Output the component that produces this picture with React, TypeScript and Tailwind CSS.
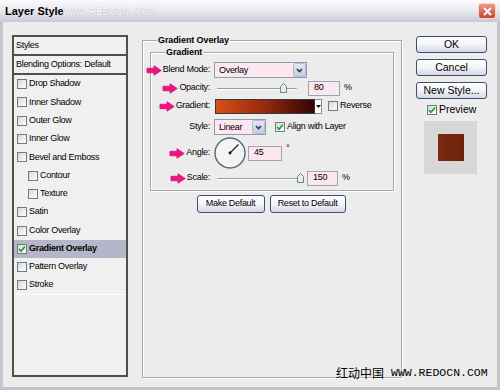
import React from "react";

const styleRows = [
  { label: "Drop Shadow" },
  { label: "Inner Shadow" },
  { label: "Outer Glow" },
  { label: "Inner Glow" },
  { label: "Bevel and Emboss" },
  { label: "Contour", indent: true },
  { label: "Texture", indent: true },
  { label: "Satin" },
  { label: "Color Overlay" },
  { label: "Gradient Overlay", active: true },
  { label: "Pattern Overlay" },
  { label: "Stroke" },
];

function Arrow() {
  return (
    <svg width="16" height="11" viewBox="0 0 16 11" className="shrink-0">
      <path
        d="M1 3.3 H8 V0.8 L15.2 5.5 L8 10.2 V7.7 H1 Z"
        fill="#e8187f"
        stroke="#e8187f"
        strokeWidth="1"
        strokeLinejoin="round"
      />
    </svg>
  );
}

function Check({ checked = false }: { checked?: boolean }) {
  return (
    <span className="flex h-[10px] w-[10px] shrink-0 items-center justify-center border border-[#6b7c8d] bg-gradient-to-br from-[#d9d9d2] to-white">
      {checked && (
        <svg width="8" height="8" viewBox="0 0 8 8">
          <path d="M1 4 L3 6.2 L7 1.5" fill="none" stroke="#23a023" strokeWidth="1.7" />
        </svg>
      )}
    </span>
  );
}

function Chevron() {
  return (
    <svg width="7" height="5" viewBox="0 0 7 5">
      <path d="M1 1 L3.5 3.6 L6 1" fill="none" stroke="#2c3a55" strokeWidth="1.6" />
    </svg>
  );
}

function Label({ text, arrow }: { text: string; arrow?: boolean }) {
  return (
    <div className="flex w-[59px] shrink-0 items-center justify-end gap-[1px] whitespace-nowrap">
      {arrow && <Arrow />}
      <span>{text}</span>
    </div>
  );
}

function Select({ value, width }: { value: string; width: string }) {
  return (
    <div className={`ml-[4px] flex h-[16px] shrink-0 border border-[#8d9cb0] bg-[#fde7ef] ${width}`}>
      <span className="flex-1 pl-[4px] leading-[14px]">{value}</span>
      <span className="flex w-[13px] items-center justify-center rounded-[2px] border border-[#b4bfd4] bg-gradient-to-b from-[#e3e8f3] to-[#c3cce0]">
        <Chevron />
      </span>
    </div>
  );
}

function Field({ value, width }: { value: string; width: string }) {
  return (
    <div className={`flex h-[15px] shrink-0 items-center border border-[#97a6b9] bg-[#fde7ef] pl-[5px] ${width}`}>
      {value}
    </div>
  );
}

function Thumb() {
  return (
    <svg width="7" height="10" viewBox="0 0 7 10">
      <path d="M0.5 3.5 L3.5 0.5 L6.5 3.5 V9.5 H0.5 Z" fill="#e4f2e4" stroke="#6f8571" strokeWidth="1" />
    </svg>
  );
}

function Slider({ width, thumb }: { width: string; thumb: string }) {
  return (
    <div className={`relative ml-[7px] h-[16px] shrink-0 ${width}`}>
      <div className="absolute left-0 right-0 top-[8px] h-[2px] rounded-[1px] border-t border-[#9a9a9a] bg-white" />
      <div className={`absolute top-[3px] ${thumb}`}>
        <Thumb />
      </div>
    </div>
  );
}

function XpButton({ children, className }: { children: React.ReactNode; className: string }) {
  return (
    <button
      className={`flex shrink-0 items-center justify-center rounded-[3px] border border-[#3d4f70] bg-gradient-to-b from-white via-[#f4f4f7] to-[#d4d7e3] text-black ${className}`}
    >
      {children}
    </button>
  );
}

export default function App() {
  return (
    <div className="relative flex h-[390px] w-[500px] flex-col overflow-hidden bg-[#ececec] font-['Liberation_Sans',Arial,sans-serif] text-[9px] tracking-[-0.3px] text-black">
      {/* Title bar */}
      <div className="flex h-[22px] shrink-0 items-center justify-between bg-gradient-to-b from-[#fbfbfd] via-[#e8e8ee] to-[#c8c9d5] pl-[5px] pr-[4px]">
        <span className="relative whitespace-nowrap text-[11px] font-bold tracking-normal">
          Layer Style
          <span className="absolute left-[58px] top-[1px] font-['Liberation_Mono',monospace] text-[11px] font-normal text-white [text-shadow:0_0_1px_#8e8e9c]">
            WWW.REDOCN.COM
          </span>
        </span>
        <span className="flex h-[16px] w-[18px] items-center justify-center rounded-[3px] border border-[#f3d6d0] bg-gradient-to-b from-[#eb9a88] to-[#c8432c]">
          <svg width="9" height="9" viewBox="0 0 9 9">
            <path d="M1 1 L8 8 M8 1 L1 8" stroke="white" strokeWidth="1.8" />
          </svg>
        </span>
      </div>

      {/* Body */}
      <div className="flex flex-1 border-x-[3px] border-b-[3px] border-[#c4c5d0] pl-[9px] pt-[13px]">
        {/* Styles list */}
        <div className="flex h-[342px] w-[116px] shrink-0 flex-col border-2 border-[#4f4f4f] bg-[#f0f0f0]">
          <div className="flex h-[19px] items-center border-b-2 border-[#4f4f4f] pl-[2px]">Styles</div>
          <div className="flex h-[19px] items-center border-b-2 border-[#4f4f4f] pl-[2px] whitespace-nowrap">
            Blending Options: Default
          </div>
          {styleRows.map((row, i) => (
            <div
              key={row.label}
              className={`flex h-[18.3px] items-center gap-[2px] whitespace-nowrap ${row.indent ? "pl-[14px]" : "pl-[3px]"} ${
                row.active ? "bg-[#b5b7c8] font-bold" : ""
              } ${i === styleRows.length - 1 ? "border-b border-white" : ""}`}
            >
              <Check checked={row.active} />
              <span>{row.label}</span>
            </div>
          ))}
        </div>

        {/* Gradient Overlay group */}
        <div className="ml-[14px] mt-[5px] flex h-[338px] w-[260px] shrink-0 flex-col border border-[#a9a9a9] shadow-[inset_1px_1px_0_#fff,1px_1px_0_#fff]">
          <span className="-mt-[6px] ml-[14px] w-fit bg-[#ececec] px-[1px] text-[9px] font-bold leading-[11px] tracking-[-0.1px]">
            Gradient Overlay
          </span>

          <div className="mx-[7px] mt-[6px] flex flex-col border border-[#a9a9a9] pb-[4px] shadow-[inset_1px_1px_0_#fff,1px_1px_0_#fff]">
            <span className="-mt-[6px] ml-[14px] w-fit bg-[#ececec] px-[1px] font-bold leading-[11px] tracking-[-0.1px]">
              Gradient
            </span>

            {/* Blend mode */}
            <div className="mt-[4px] flex h-[16px] items-center">
              <Label text="Blend Mode:" arrow />
              <Select value="Overlay" width="w-[93px]" />
            </div>

            {/* Opacity */}
            <div className="mt-[2px] flex h-[16px] items-center">
              <Label text="Opacity:" arrow />
              <Slider width="w-[80px]" thumb="left-[63px]" />
              <div className="ml-[11px]">
                <Field value="80" width="w-[32px]" />
              </div>
              <span className="ml-[4px]">%</span>
            </div>

            {/* Gradient */}
            <div className="mt-[2px] flex h-[16px] items-center">
              <Label text="Gradient:" arrow />
              <div className="ml-[5px] h-[15px] w-[100px] shrink-0 border border-[#3a3a3a] bg-gradient-to-r from-[#d84e19] via-[#952a0d] to-[#330605]" />
              <div className="flex h-[15px] w-[7px] shrink-0 items-center justify-center border border-l-0 border-[#8a8a8a] bg-white">
                <svg width="5" height="3" viewBox="0 0 5 3">
                  <path d="M0 0 H5 L2.5 3 Z" fill="#111" />
                </svg>
              </div>
              <div className="ml-[6px] flex items-center gap-[2px]">
                <Check />
                <span>Reverse</span>
              </div>
            </div>

            {/* Style */}
            <div className="mt-[5px] flex h-[16px] items-center">
              <Label text="Style:" />
              <Select value="Linear" width="w-[52px]" />
              <div className="ml-[9px] flex items-center gap-[2px] whitespace-nowrap">
                <Check checked />
                <span>Align with Layer</span>
              </div>
            </div>

            {/* Angle */}
            <div className="mt-[2px] flex h-[32px] items-center">
              <Label text="Angle:" arrow />
              <svg width="32" height="32" viewBox="0 0 32 32" className="ml-[4px] shrink-0">
                <circle cx="16" cy="16" r="15" fill="#f4f4f4" stroke="#56677a" strokeWidth="1.4" />
                <line x1="16" y1="16" x2="24.5" y2="7.5" stroke="#222" strokeWidth="1.2" />
                <circle cx="16" cy="16" r="1.4" fill="#111" />
              </svg>
              <div className="ml-[2px]">
                <Field value="45" width="w-[34px]" />
              </div>
              <span className="ml-[4px] self-start pt-[5px]">°</span>
            </div>

            {/* Scale */}
            <div className="mt-[1px] flex h-[16px] items-center">
              <Label text="Scale:" arrow />
              <Slider width="w-[83px]" thumb="left-[80px]" />
              <div className="ml-[7px]">
                <Field value="150" width="w-[31px]" />
              </div>
              <span className="ml-[4px]">%</span>
            </div>
          </div>

          <div className="mt-[4px] flex justify-center gap-[5px] pr-[2px]">
            <XpButton className="h-[18px] w-[68px]">Make Default</XpButton>
            <XpButton className="h-[18px] w-[76px]">Reset to Default</XpButton>
          </div>
        </div>

        {/* Right column */}
        <div className="ml-[14px] flex w-[71px] shrink-0 flex-col pt-[1px] text-[10.5px] tracking-normal">
          <XpButton className="h-[17px] w-full">OK</XpButton>
          <XpButton className="mt-[6px] h-[17px] w-full">Cancel</XpButton>
          <XpButton className="mt-[6px] h-[17px] w-full">New Style...</XpButton>
          <div className="ml-[11px] mt-[6px] flex h-[10px] items-center gap-[2px]">
            <Check checked />
            <span>Preview</span>
          </div>
          <div className="ml-[8px] mt-[6px] flex h-[53px] w-[53px] items-center justify-center bg-[#d7d7d7]">
            <div className="h-[27px] w-[26px] bg-gradient-to-r from-[#7e2a11] to-[#6b210c]" />
          </div>
        </div>
      </div>

      {/* Watermark */}
      <div className="absolute left-[336px] top-[366px] flex items-center whitespace-nowrap tracking-normal">
        <span className="font-['Noto_Sans_CJK_SC',sans-serif] text-[12px] leading-[14px]">红动中国</span>
        <span className="ml-[7px] font-['Liberation_Mono',monospace] text-[11.5px] leading-[14px]">WWW.REDOCN.COM</span>
      </div>
    </div>
  );
}
